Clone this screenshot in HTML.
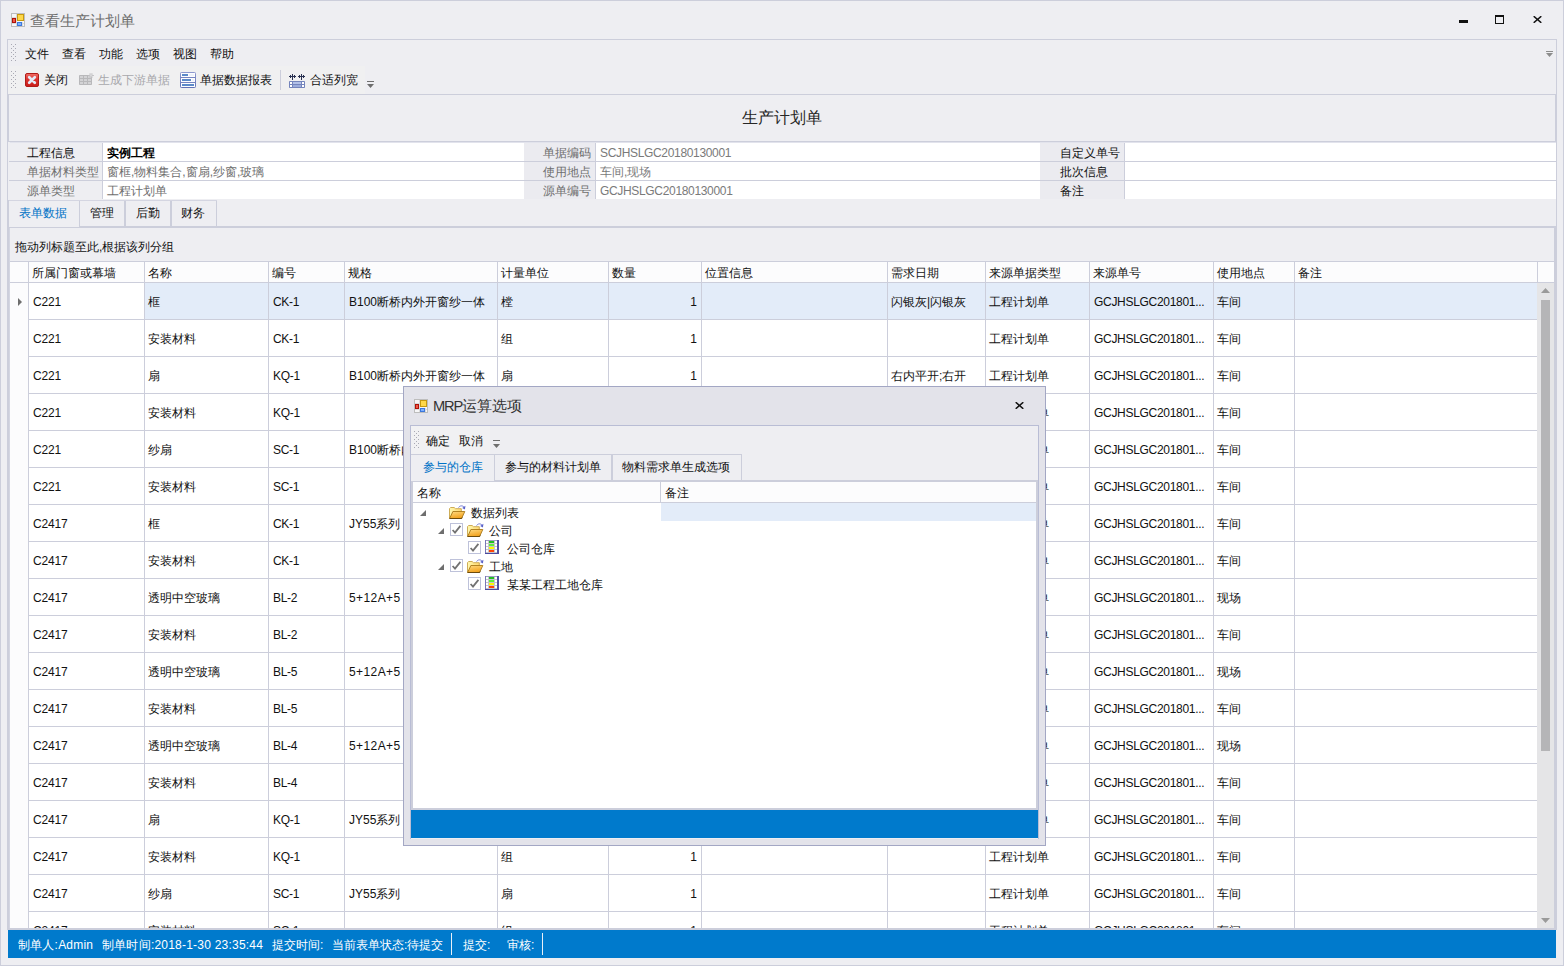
<!DOCTYPE html>
<html lang="zh"><head><meta charset="utf-8"><title>查看生产计划单</title>
<style>
html,body{margin:0;padding:0}
body{width:1564px;height:966px;overflow:hidden;position:relative;background:#EEEEF2;font-family:"Liberation Sans",sans-serif;font-size:12px}
#w{position:absolute;left:0;top:0;width:1564px;height:966px;box-sizing:border-box;border:1px solid #CCCEDB;z-index:50;pointer-events:none}
div{position:absolute;box-sizing:border-box}
.t{white-space:nowrap;overflow:visible}
.a{position:absolute;display:block}
</style></head><body>
<svg class="a" style="left:0;top:0" width="0" height="0"><defs><linearGradient id="cg" x1="0" y1="0" x2="0" y2="1"><stop offset="0" stop-color="#F07068"/><stop offset="0.45" stop-color="#DC3430"/><stop offset="1" stop-color="#C81C18"/></linearGradient><linearGradient id="rg" x1="0" y1="0" x2="0" y2="1"><stop offset="0" stop-color="#8C98CE"/><stop offset="1" stop-color="#6272B6"/></linearGradient><linearGradient id="fg" x1="0" y1="0" x2="0.4" y2="1"><stop offset="0" stop-color="#FFDC84"/><stop offset="1" stop-color="#F2A21E"/></linearGradient>
<linearGradient id="fb" x1="0" y1="0" x2="1" y2="0"><stop offset="0" stop-color="#FFF9B0"/><stop offset="1" stop-color="#FFD870"/></linearGradient></defs></svg>
<svg class="a" style="left:11px;top:13px" width="14" height="14" viewBox="0 0 14 14">
<rect x="0.5" y="0.5" width="13" height="13" fill="#F6F6F8" stroke="#BDBDBD"/><path d="M5.5 1V13M1 4.5H6M1 10.5H13M11.5 9V13" stroke="#DADADC" fill="none"/>
<rect x="6" y="1" width="7" height="7" fill="#C79A10"/><rect x="7" y="2" width="5" height="5" fill="#FFD84A"/>
<rect x="1" y="5" width="4" height="5" fill="#B01208"/><rect x="2" y="6" width="2" height="3" fill="#F0584A"/>
<rect x="6" y="9" width="5" height="4" fill="#3C78DC"/><rect x="7" y="10" width="3" height="2" fill="#7FB0FF"/>
</svg>
<div class="t" style="left:30px;top:10px;height:22px;line-height:22px;font-size:14.67px;color:#6E6E6E;">查看生产计划单</div>
<div style="left:1459px;top:20px;width:9px;height:3px;background:#111111;"></div>
<div style="left:1495px;top:15px;width:9px;height:9px;border:1px solid #111111;border-top-width:2px;"></div>
<svg class="a" style="left:1533px;top:16px" width="9" height="7" viewBox="0 0 9 7"><path d="M0.7 0.2L8.3 6.8M8.3 0.2L0.7 6.8" stroke="#111111" stroke-width="1.5"/></svg>
<div style="left:7px;top:39px;width:1550px;height:891px;border:1px solid #CCCEDB;border-bottom:none;"></div>
<svg class="a" style="left:11px;top:44px" width="6" height="18" viewBox="0 0 6 18"><rect x="0" y="0" width="1" height="1" fill="#A9A9B4"/><rect x="4" y="0" width="1" height="1" fill="#A9A9B4"/><rect x="2" y="2" width="1" height="1" fill="#A9A9B4"/><rect x="0" y="4" width="1" height="1" fill="#A9A9B4"/><rect x="4" y="4" width="1" height="1" fill="#A9A9B4"/><rect x="2" y="6" width="1" height="1" fill="#A9A9B4"/><rect x="0" y="8" width="1" height="1" fill="#A9A9B4"/><rect x="4" y="8" width="1" height="1" fill="#A9A9B4"/><rect x="2" y="10" width="1" height="1" fill="#A9A9B4"/><rect x="0" y="12" width="1" height="1" fill="#A9A9B4"/><rect x="4" y="12" width="1" height="1" fill="#A9A9B4"/><rect x="2" y="14" width="1" height="1" fill="#A9A9B4"/><rect x="0" y="16" width="1" height="1" fill="#A9A9B4"/><rect x="4" y="16" width="1" height="1" fill="#A9A9B4"/></svg>
<div class="t" style="left:25px;top:45px;height:19px;line-height:19px;color:#111111;">文件</div>
<div class="t" style="left:62px;top:45px;height:19px;line-height:19px;color:#111111;">查看</div>
<div class="t" style="left:99px;top:45px;height:19px;line-height:19px;color:#111111;">功能</div>
<div class="t" style="left:136px;top:45px;height:19px;line-height:19px;color:#111111;">选项</div>
<div class="t" style="left:173px;top:45px;height:19px;line-height:19px;color:#111111;">视图</div>
<div class="t" style="left:210px;top:45px;height:19px;line-height:19px;color:#111111;">帮助</div>
<div style="left:1546px;top:51px;width:7px;height:1px;background:#8C8C8C;"></div>
<svg class="a" style="left:1546px;top:53px" width="7" height="4" viewBox="0 0 7 4"><path d="M0 0H7L3.5 4Z" fill="#8C8C8C"/></svg>
<div style="left:8px;top:66px;width:357px;height:28px;background:#F0F0F1;"></div>
<svg class="a" style="left:11px;top:71px" width="6" height="18" viewBox="0 0 6 18"><rect x="0" y="0" width="1" height="1" fill="#A9A9B4"/><rect x="4" y="0" width="1" height="1" fill="#A9A9B4"/><rect x="2" y="2" width="1" height="1" fill="#A9A9B4"/><rect x="0" y="4" width="1" height="1" fill="#A9A9B4"/><rect x="4" y="4" width="1" height="1" fill="#A9A9B4"/><rect x="2" y="6" width="1" height="1" fill="#A9A9B4"/><rect x="0" y="8" width="1" height="1" fill="#A9A9B4"/><rect x="4" y="8" width="1" height="1" fill="#A9A9B4"/><rect x="2" y="10" width="1" height="1" fill="#A9A9B4"/><rect x="0" y="12" width="1" height="1" fill="#A9A9B4"/><rect x="4" y="12" width="1" height="1" fill="#A9A9B4"/><rect x="2" y="14" width="1" height="1" fill="#A9A9B4"/><rect x="0" y="16" width="1" height="1" fill="#A9A9B4"/><rect x="4" y="16" width="1" height="1" fill="#A9A9B4"/></svg>
<svg class="a" style="left:25px;top:73px" width="14" height="14" viewBox="0 0 14 14">
<rect x="0.5" y="0.5" width="13" height="13" rx="1.5" fill="url(#cg)" stroke="#B01C18"/>
<path d="M4.2 4.2L9.8 9.8M9.8 4.2L4.2 9.8" stroke="#E4EAF6" stroke-width="2.7" stroke-linecap="round"/></svg>
<div class="t" style="left:44px;top:71px;height:19px;line-height:19px;color:#111111;">关闭</div>
<svg class="a" style="left:79px;top:72px" width="16" height="16" viewBox="0 0 16 16">
<rect x="0" y="3" width="13" height="10" rx="0.8" fill="#B8B8BA"/>
<g fill="#D3D3D5"><rect x="1" y="4" width="3" height="2"/><rect x="5" y="4" width="3" height="2"/><rect x="9" y="4" width="3" height="2"/><rect x="1" y="7" width="3" height="2"/><rect x="5" y="7" width="3" height="2"/><rect x="9" y="7" width="3" height="2"/><rect x="1" y="10" width="3" height="2"/><rect x="5" y="10" width="3" height="2"/><rect x="9" y="10" width="3" height="2"/></g>
<path d="M12 1V6.5M9.5 3.5H15M10.2 1.8L13.8 5.3M13.8 1.8L10.2 5.3" stroke="#C4C4C6" stroke-width="1"/><rect x="11" y="2.5" width="2" height="2" fill="#D6D6D8"/></svg>
<div class="t" style="left:98px;top:71px;height:19px;line-height:19px;color:#A8A8AC;">生成下游单据</div>
<svg class="a" style="left:180px;top:72px" width="16" height="16" viewBox="0 0 16 16">
<rect x="0.5" y="0.5" width="15" height="15" rx="0.8" fill="#FDFDFF" stroke="url(#rg)"/>
<path d="M0.5 5.5H15.5M0.5 10.5H15.5" stroke="#7684C0"/>
<rect x="2" y="2" width="6" height="2" fill="#5C8AC8"/><rect x="9" y="2" width="5" height="2" fill="#EEF2FA"/><rect x="2" y="7" width="9" height="2" fill="#5C8AC8"/><rect x="12" y="7" width="2" height="2" fill="#EEF2FA"/><rect x="2" y="12" width="12" height="2" fill="#5C8AC8"/></svg>
<div class="t" style="left:200px;top:71px;height:19px;line-height:19px;color:#111111;">单据数据报表</div>
<div style="left:280px;top:70px;width:1px;height:20px;background:#CCCEDB;"></div>
<svg class="a" style="left:289px;top:74px" width="16" height="14" viewBox="0 0 16 14">
<g fill="#283050"><rect x="3" y="0" width="1" height="6"/><rect x="12" y="0" width="1" height="6"/>
<rect x="0" y="2" width="7" height="1"/><rect x="9" y="2" width="7" height="1"/>
<rect x="1" y="1" width="1" height="3"/><rect x="5" y="1" width="1" height="3"/><rect x="10" y="1" width="1" height="3"/><rect x="14" y="1" width="1" height="3"/></g>
<rect x="0" y="7" width="16" height="7" rx="0.8" fill="#7484BC"/>
<rect x="4" y="8" width="8" height="2" fill="#B2C0E8"/><rect x="4" y="11" width="8" height="2" fill="#9CACDC"/>
<g fill="#fff"><rect x="1" y="8" width="2" height="2"/><rect x="13" y="8" width="2" height="2"/><rect x="1" y="11" width="2" height="2"/><rect x="13" y="11" width="2" height="2"/></g></svg>
<div class="t" style="left:310px;top:71px;height:19px;line-height:19px;color:#111111;">合适列宽</div>
<div style="left:367px;top:81px;width:7px;height:1px;background:#6E6E6E;"></div>
<svg class="a" style="left:367px;top:84px" width="7" height="4" viewBox="0 0 7 4"><path d="M0 0H7L3.5 4Z" fill="#6E6E6E"/></svg>
<div style="left:8px;top:94px;width:1548px;height:48px;border:1px solid #CCCEDB;"></div>
<div class="t" style="left:0px;top:106px;height:24px;line-height:24px;width:1564px;text-align:center;font-size:16px;color:#262626;left:0;">生产计划单</div>
<div style="left:103px;top:143px;width:421px;height:18px;background:#fff;"></div>
<div style="left:596px;top:143px;width:444px;height:18px;background:#fff;"></div>
<div style="left:1125px;top:143px;width:431px;height:18px;background:#fff;"></div>
<div style="left:524px;top:143px;width:71px;height:18px;background:#EBEBF0;"></div>
<div style="left:1040px;top:143px;width:84px;height:18px;background:#EBEBF0;"></div>
<div style="left:102px;top:143px;width:1px;height:18px;background:#CCCEDB;"></div>
<div style="left:595px;top:143px;width:1px;height:18px;background:#CCCEDB;"></div>
<div style="left:1124px;top:143px;width:1px;height:18px;background:#CCCEDB;"></div>
<div class="t" style="left:27px;top:144px;height:19px;line-height:19px;color:#111111;">工程信息</div>
<div class="t" style="left:107px;top:144px;height:19px;line-height:19px;color:#000;font-weight:bold;">实例工程</div>
<div class="t" style="left:543px;top:144px;height:19px;line-height:19px;color:#6E6E6E;">单据编码</div>
<div class="t" style="left:600px;top:144px;height:19px;line-height:19px;color:#7A7A7A;"><span style="letter-spacing:-0.33px">SCJHSLGC20180130001</span></div>
<div class="t" style="left:1060px;top:144px;height:19px;line-height:19px;color:#111111;">自定义单号</div>
<div style="left:103px;top:162px;width:421px;height:18px;background:#fff;"></div>
<div style="left:596px;top:162px;width:444px;height:18px;background:#fff;"></div>
<div style="left:1125px;top:162px;width:431px;height:18px;background:#fff;"></div>
<div style="left:524px;top:162px;width:71px;height:18px;background:#EBEBF0;"></div>
<div style="left:1040px;top:162px;width:84px;height:18px;background:#EBEBF0;"></div>
<div style="left:102px;top:162px;width:1px;height:18px;background:#CCCEDB;"></div>
<div style="left:595px;top:162px;width:1px;height:18px;background:#CCCEDB;"></div>
<div style="left:1124px;top:162px;width:1px;height:18px;background:#CCCEDB;"></div>
<div class="t" style="left:27px;top:163px;height:19px;line-height:19px;color:#6E6E6E;">单据材料类型</div>
<div class="t" style="left:107px;top:163px;height:19px;line-height:19px;color:#6E6E6E;">窗框,物料集合,窗扇,纱窗,玻璃</div>
<div class="t" style="left:543px;top:163px;height:19px;line-height:19px;color:#6E6E6E;">使用地点</div>
<div class="t" style="left:600px;top:163px;height:19px;line-height:19px;color:#7A7A7A;">车间,现场</div>
<div class="t" style="left:1060px;top:163px;height:19px;line-height:19px;color:#111111;">批次信息</div>
<div style="left:103px;top:181px;width:421px;height:18px;background:#fff;"></div>
<div style="left:596px;top:181px;width:444px;height:18px;background:#fff;"></div>
<div style="left:1125px;top:181px;width:431px;height:18px;background:#fff;"></div>
<div style="left:524px;top:181px;width:71px;height:18px;background:#EBEBF0;"></div>
<div style="left:1040px;top:181px;width:84px;height:18px;background:#EBEBF0;"></div>
<div style="left:102px;top:181px;width:1px;height:18px;background:#CCCEDB;"></div>
<div style="left:595px;top:181px;width:1px;height:18px;background:#CCCEDB;"></div>
<div style="left:1124px;top:181px;width:1px;height:18px;background:#CCCEDB;"></div>
<div class="t" style="left:27px;top:182px;height:19px;line-height:19px;color:#6E6E6E;">源单类型</div>
<div class="t" style="left:107px;top:182px;height:19px;line-height:19px;color:#6E6E6E;">工程计划单</div>
<div class="t" style="left:543px;top:182px;height:19px;line-height:19px;color:#6E6E6E;">源单编号</div>
<div class="t" style="left:600px;top:182px;height:19px;line-height:19px;color:#7A7A7A;"><span style="letter-spacing:-0.33px">GCJHSLGC20180130001</span></div>
<div class="t" style="left:1060px;top:182px;height:19px;line-height:19px;color:#111111;">备注</div>
<div style="left:9px;top:161px;width:1547px;height:1px;background:#CCCEDB;"></div>
<div style="left:9px;top:180px;width:1547px;height:1px;background:#CCCEDB;"></div>
<div style="left:10px;top:142px;width:1546px;height:1px;background:#E2E3EC;"></div>
<div style="left:8px;top:200px;width:209px;height:1px;background:#D4D5E1;"></div>
<div class="t" style="left:19px;top:203px;height:21px;line-height:21px;color:#0072C6;z-index:3;">表单数据</div>
<div style="left:79px;top:201px;width:46px;height:26px;border-left:1px solid #CCCEDB;border-right:1px solid #CCCEDB;border-bottom:1px solid #CCCEDB;"></div>
<div class="t" style="left:90px;top:203px;height:21px;line-height:21px;color:#111111;z-index:3;">管理</div>
<div style="left:125px;top:201px;width:46px;height:26px;border-left:1px solid #CCCEDB;border-right:1px solid #CCCEDB;border-bottom:1px solid #CCCEDB;"></div>
<div class="t" style="left:136px;top:203px;height:21px;line-height:21px;color:#111111;z-index:3;">后勤</div>
<div style="left:171px;top:201px;width:46px;height:26px;border-left:1px solid #CCCEDB;border-right:1px solid #CCCEDB;border-bottom:1px solid #CCCEDB;"></div>
<div class="t" style="left:181px;top:203px;height:21px;line-height:21px;color:#111111;z-index:3;">财务</div>
<div style="left:8px;top:200px;width:1px;height:730px;background:#CCCEDB;"></div>
<div style="left:1555px;top:227px;width:1px;height:703px;background:#CCCEDB;"></div>
<div style="left:9px;top:227px;width:1546px;height:1px;background:#CCCEDB;"></div>
<div style="left:217px;top:226px;width:1339px;height:1px;background:#CCCEDB;"></div>
<div style="left:9px;top:228px;width:1px;height:702px;background:#D3D5E1;"></div>
<div style="left:1554px;top:228px;width:1px;height:702px;background:#CCCEDB;"></div>
<div class="t" style="left:15px;top:237px;height:21px;line-height:21px;color:#111111;z-index:3;">拖动列标题至此,根据该列分组</div>
<div style="left:10px;top:261px;width:1544px;height:667px;background:#fff;z-index:2;"></div>
<div style="left:10px;top:261px;width:1544px;height:22px;background:#FCFCFD;border-top:1px solid #CCCEDB;border-bottom:1px solid #CCCEDB;z-index:3;"></div>
<div style="left:10px;top:283px;width:18px;height:645px;background:#FCFCFD;z-index:3;"></div>
<div class="t" style="left:32px;top:263px;height:21px;line-height:21px;color:#111111;z-index:5;">所属门窗或幕墙</div>
<div class="t" style="left:148px;top:263px;height:21px;line-height:21px;color:#111111;z-index:5;">名称</div>
<div class="t" style="left:272px;top:263px;height:21px;line-height:21px;color:#111111;z-index:5;">编号</div>
<div class="t" style="left:348px;top:263px;height:21px;line-height:21px;color:#111111;z-index:5;">规格</div>
<div class="t" style="left:501px;top:263px;height:21px;line-height:21px;color:#111111;z-index:5;">计量单位</div>
<div class="t" style="left:612px;top:263px;height:21px;line-height:21px;color:#111111;z-index:5;">数量</div>
<div class="t" style="left:705px;top:263px;height:21px;line-height:21px;color:#111111;z-index:5;">位置信息</div>
<div class="t" style="left:891px;top:263px;height:21px;line-height:21px;color:#111111;z-index:5;">需求日期</div>
<div class="t" style="left:989px;top:263px;height:21px;line-height:21px;color:#111111;z-index:5;">来源单据类型</div>
<div class="t" style="left:1093px;top:263px;height:21px;line-height:21px;color:#111111;z-index:5;">来源单号</div>
<div class="t" style="left:1217px;top:263px;height:21px;line-height:21px;color:#111111;z-index:5;">使用地点</div>
<div class="t" style="left:1298px;top:263px;height:21px;line-height:21px;color:#111111;z-index:5;">备注</div>
<div style="left:145px;top:283px;width:1392px;height:36px;background:#E3ECF9;z-index:3;"></div>
<div style="left:28px;top:319px;width:1509px;height:1px;background:#CCCEDB;z-index:4;"></div>
<div style="left:28px;top:356px;width:1509px;height:1px;background:#CCCEDB;z-index:4;"></div>
<div style="left:28px;top:393px;width:1509px;height:1px;background:#CCCEDB;z-index:4;"></div>
<div style="left:28px;top:430px;width:1509px;height:1px;background:#CCCEDB;z-index:4;"></div>
<div style="left:28px;top:467px;width:1509px;height:1px;background:#CCCEDB;z-index:4;"></div>
<div style="left:28px;top:504px;width:1509px;height:1px;background:#CCCEDB;z-index:4;"></div>
<div style="left:28px;top:541px;width:1509px;height:1px;background:#CCCEDB;z-index:4;"></div>
<div style="left:28px;top:578px;width:1509px;height:1px;background:#CCCEDB;z-index:4;"></div>
<div style="left:28px;top:615px;width:1509px;height:1px;background:#CCCEDB;z-index:4;"></div>
<div style="left:28px;top:652px;width:1509px;height:1px;background:#CCCEDB;z-index:4;"></div>
<div style="left:28px;top:689px;width:1509px;height:1px;background:#CCCEDB;z-index:4;"></div>
<div style="left:28px;top:726px;width:1509px;height:1px;background:#CCCEDB;z-index:4;"></div>
<div style="left:28px;top:763px;width:1509px;height:1px;background:#CCCEDB;z-index:4;"></div>
<div style="left:28px;top:800px;width:1509px;height:1px;background:#CCCEDB;z-index:4;"></div>
<div style="left:28px;top:837px;width:1509px;height:1px;background:#CCCEDB;z-index:4;"></div>
<div style="left:28px;top:874px;width:1509px;height:1px;background:#CCCEDB;z-index:4;"></div>
<div style="left:28px;top:911px;width:1509px;height:1px;background:#CCCEDB;z-index:4;"></div>
<div style="left:28px;top:262px;width:1px;height:666px;background:#CCCEDB;z-index:4;"></div>
<div style="left:144px;top:262px;width:1px;height:666px;background:#CCCEDB;z-index:4;"></div>
<div style="left:268px;top:262px;width:1px;height:666px;background:#CCCEDB;z-index:4;"></div>
<div style="left:344px;top:262px;width:1px;height:666px;background:#CCCEDB;z-index:4;"></div>
<div style="left:497px;top:262px;width:1px;height:666px;background:#CCCEDB;z-index:4;"></div>
<div style="left:608px;top:262px;width:1px;height:666px;background:#CCCEDB;z-index:4;"></div>
<div style="left:701px;top:262px;width:1px;height:666px;background:#CCCEDB;z-index:4;"></div>
<div style="left:887px;top:262px;width:1px;height:666px;background:#CCCEDB;z-index:4;"></div>
<div style="left:985px;top:262px;width:1px;height:666px;background:#CCCEDB;z-index:4;"></div>
<div style="left:1089px;top:262px;width:1px;height:666px;background:#CCCEDB;z-index:4;"></div>
<div style="left:1213px;top:262px;width:1px;height:666px;background:#CCCEDB;z-index:4;"></div>
<div style="left:1294px;top:262px;width:1px;height:666px;background:#CCCEDB;z-index:4;"></div>
<div style="left:1537px;top:262px;width:1px;height:666px;background:#CCCEDB;z-index:4;"></div>
<svg class="a" style="left:18px;top:298px;z-index:5" width="4" height="8" viewBox="0 0 4 8"><path d="M0 0L4 4L0 8Z" fill="#6E6E6E"/></svg>
<div class="t" style="left:33px;top:284px;height:37px;line-height:37px;color:#111111;z-index:5;letter-spacing:-0.15px;">C221</div>
<div class="t" style="left:148px;top:284px;height:37px;line-height:37px;color:#111111;z-index:5;">框</div>
<div class="t" style="left:273px;top:284px;height:37px;line-height:37px;color:#111111;z-index:5;letter-spacing:-0.3px;">CK-1</div>
<div class="t" style="left:349px;top:284px;height:37px;line-height:37px;color:#111111;z-index:5;">B100断桥内外开窗纱一体</div>
<div class="t" style="left:501px;top:284px;height:37px;line-height:37px;color:#111111;z-index:5;">樘</div>
<div class="t" style="left:891px;top:284px;height:37px;line-height:37px;color:#111111;z-index:5;">闪银灰|闪银灰</div>
<div class="t" style="left:989px;top:284px;height:37px;line-height:37px;color:#111111;z-index:5;">工程计划单</div>
<div class="t" style="left:1094px;top:284px;height:37px;line-height:37px;color:#111111;z-index:5;"><span style="letter-spacing:-0.3px">GCJHSLGC201801...</span></div>
<div class="t" style="left:1217px;top:284px;height:37px;line-height:37px;color:#111111;z-index:5;">车间</div>
<div class="t" style="left:608px;top:284px;width:89px;height:37px;line-height:37px;text-align:right;color:#111111;z-index:5;">1</div>
<div class="t" style="left:33px;top:321px;height:37px;line-height:37px;color:#111111;z-index:5;letter-spacing:-0.15px;">C221</div>
<div class="t" style="left:148px;top:321px;height:37px;line-height:37px;color:#111111;z-index:5;">安装材料</div>
<div class="t" style="left:273px;top:321px;height:37px;line-height:37px;color:#111111;z-index:5;letter-spacing:-0.3px;">CK-1</div>
<div class="t" style="left:501px;top:321px;height:37px;line-height:37px;color:#111111;z-index:5;">组</div>
<div class="t" style="left:989px;top:321px;height:37px;line-height:37px;color:#111111;z-index:5;">工程计划单</div>
<div class="t" style="left:1094px;top:321px;height:37px;line-height:37px;color:#111111;z-index:5;"><span style="letter-spacing:-0.3px">GCJHSLGC201801...</span></div>
<div class="t" style="left:1217px;top:321px;height:37px;line-height:37px;color:#111111;z-index:5;">车间</div>
<div class="t" style="left:608px;top:321px;width:89px;height:37px;line-height:37px;text-align:right;color:#111111;z-index:5;">1</div>
<div class="t" style="left:33px;top:358px;height:37px;line-height:37px;color:#111111;z-index:5;letter-spacing:-0.15px;">C221</div>
<div class="t" style="left:148px;top:358px;height:37px;line-height:37px;color:#111111;z-index:5;">扇</div>
<div class="t" style="left:273px;top:358px;height:37px;line-height:37px;color:#111111;z-index:5;letter-spacing:-0.3px;">KQ-1</div>
<div class="t" style="left:349px;top:358px;height:37px;line-height:37px;color:#111111;z-index:5;">B100断桥内外开窗纱一体</div>
<div class="t" style="left:501px;top:358px;height:37px;line-height:37px;color:#111111;z-index:5;">扇</div>
<div class="t" style="left:891px;top:358px;height:37px;line-height:37px;color:#111111;z-index:5;">右内平开;右开</div>
<div class="t" style="left:989px;top:358px;height:37px;line-height:37px;color:#111111;z-index:5;">工程计划单</div>
<div class="t" style="left:1094px;top:358px;height:37px;line-height:37px;color:#111111;z-index:5;"><span style="letter-spacing:-0.3px">GCJHSLGC201801...</span></div>
<div class="t" style="left:1217px;top:358px;height:37px;line-height:37px;color:#111111;z-index:5;">车间</div>
<div class="t" style="left:608px;top:358px;width:89px;height:37px;line-height:37px;text-align:right;color:#111111;z-index:5;">1</div>
<div class="t" style="left:33px;top:395px;height:37px;line-height:37px;color:#111111;z-index:5;letter-spacing:-0.15px;">C221</div>
<div class="t" style="left:148px;top:395px;height:37px;line-height:37px;color:#111111;z-index:5;">安装材料</div>
<div class="t" style="left:273px;top:395px;height:37px;line-height:37px;color:#111111;z-index:5;letter-spacing:-0.3px;">KQ-1</div>
<div class="t" style="left:501px;top:395px;height:37px;line-height:37px;color:#111111;z-index:5;">组</div>
<div class="t" style="left:989px;top:395px;height:37px;line-height:37px;color:#111111;z-index:5;">工程计划单</div>
<div class="t" style="left:1094px;top:395px;height:37px;line-height:37px;color:#111111;z-index:5;"><span style="letter-spacing:-0.3px">GCJHSLGC201801...</span></div>
<div class="t" style="left:1217px;top:395px;height:37px;line-height:37px;color:#111111;z-index:5;">车间</div>
<div class="t" style="left:608px;top:395px;width:89px;height:37px;line-height:37px;text-align:right;color:#111111;z-index:5;">1</div>
<div class="t" style="left:33px;top:432px;height:37px;line-height:37px;color:#111111;z-index:5;letter-spacing:-0.15px;">C221</div>
<div class="t" style="left:148px;top:432px;height:37px;line-height:37px;color:#111111;z-index:5;">纱扇</div>
<div class="t" style="left:273px;top:432px;height:37px;line-height:37px;color:#111111;z-index:5;letter-spacing:-0.3px;">SC-1</div>
<div class="t" style="left:349px;top:432px;height:37px;line-height:37px;color:#111111;z-index:5;">B100断桥内外开窗纱一体</div>
<div class="t" style="left:501px;top:432px;height:37px;line-height:37px;color:#111111;z-index:5;">扇</div>
<div class="t" style="left:989px;top:432px;height:37px;line-height:37px;color:#111111;z-index:5;">工程计划单</div>
<div class="t" style="left:1094px;top:432px;height:37px;line-height:37px;color:#111111;z-index:5;"><span style="letter-spacing:-0.3px">GCJHSLGC201801...</span></div>
<div class="t" style="left:1217px;top:432px;height:37px;line-height:37px;color:#111111;z-index:5;">车间</div>
<div class="t" style="left:608px;top:432px;width:89px;height:37px;line-height:37px;text-align:right;color:#111111;z-index:5;">1</div>
<div class="t" style="left:33px;top:469px;height:37px;line-height:37px;color:#111111;z-index:5;letter-spacing:-0.15px;">C221</div>
<div class="t" style="left:148px;top:469px;height:37px;line-height:37px;color:#111111;z-index:5;">安装材料</div>
<div class="t" style="left:273px;top:469px;height:37px;line-height:37px;color:#111111;z-index:5;letter-spacing:-0.3px;">SC-1</div>
<div class="t" style="left:501px;top:469px;height:37px;line-height:37px;color:#111111;z-index:5;">组</div>
<div class="t" style="left:989px;top:469px;height:37px;line-height:37px;color:#111111;z-index:5;">工程计划单</div>
<div class="t" style="left:1094px;top:469px;height:37px;line-height:37px;color:#111111;z-index:5;"><span style="letter-spacing:-0.3px">GCJHSLGC201801...</span></div>
<div class="t" style="left:1217px;top:469px;height:37px;line-height:37px;color:#111111;z-index:5;">车间</div>
<div class="t" style="left:608px;top:469px;width:89px;height:37px;line-height:37px;text-align:right;color:#111111;z-index:5;">1</div>
<div class="t" style="left:33px;top:506px;height:37px;line-height:37px;color:#111111;z-index:5;letter-spacing:-0.15px;">C2417</div>
<div class="t" style="left:148px;top:506px;height:37px;line-height:37px;color:#111111;z-index:5;">框</div>
<div class="t" style="left:273px;top:506px;height:37px;line-height:37px;color:#111111;z-index:5;letter-spacing:-0.3px;">CK-1</div>
<div class="t" style="left:349px;top:506px;height:37px;line-height:37px;color:#111111;z-index:5;">JY55系列</div>
<div class="t" style="left:501px;top:506px;height:37px;line-height:37px;color:#111111;z-index:5;">樘</div>
<div class="t" style="left:989px;top:506px;height:37px;line-height:37px;color:#111111;z-index:5;">工程计划单</div>
<div class="t" style="left:1094px;top:506px;height:37px;line-height:37px;color:#111111;z-index:5;"><span style="letter-spacing:-0.3px">GCJHSLGC201801...</span></div>
<div class="t" style="left:1217px;top:506px;height:37px;line-height:37px;color:#111111;z-index:5;">车间</div>
<div class="t" style="left:608px;top:506px;width:89px;height:37px;line-height:37px;text-align:right;color:#111111;z-index:5;">1</div>
<div class="t" style="left:33px;top:543px;height:37px;line-height:37px;color:#111111;z-index:5;letter-spacing:-0.15px;">C2417</div>
<div class="t" style="left:148px;top:543px;height:37px;line-height:37px;color:#111111;z-index:5;">安装材料</div>
<div class="t" style="left:273px;top:543px;height:37px;line-height:37px;color:#111111;z-index:5;letter-spacing:-0.3px;">CK-1</div>
<div class="t" style="left:501px;top:543px;height:37px;line-height:37px;color:#111111;z-index:5;">组</div>
<div class="t" style="left:989px;top:543px;height:37px;line-height:37px;color:#111111;z-index:5;">工程计划单</div>
<div class="t" style="left:1094px;top:543px;height:37px;line-height:37px;color:#111111;z-index:5;"><span style="letter-spacing:-0.3px">GCJHSLGC201801...</span></div>
<div class="t" style="left:1217px;top:543px;height:37px;line-height:37px;color:#111111;z-index:5;">车间</div>
<div class="t" style="left:608px;top:543px;width:89px;height:37px;line-height:37px;text-align:right;color:#111111;z-index:5;">1</div>
<div class="t" style="left:33px;top:580px;height:37px;line-height:37px;color:#111111;z-index:5;letter-spacing:-0.15px;">C2417</div>
<div class="t" style="left:148px;top:580px;height:37px;line-height:37px;color:#111111;z-index:5;">透明中空玻璃</div>
<div class="t" style="left:273px;top:580px;height:37px;line-height:37px;color:#111111;z-index:5;letter-spacing:-0.3px;">BL-2</div>
<div class="t" style="left:349px;top:580px;height:37px;line-height:37px;color:#111111;z-index:5;letter-spacing:0.4px;">5+12A+5</div>
<div class="t" style="left:501px;top:580px;height:37px;line-height:37px;color:#111111;z-index:5;">块</div>
<div class="t" style="left:989px;top:580px;height:37px;line-height:37px;color:#111111;z-index:5;">工程计划单</div>
<div class="t" style="left:1094px;top:580px;height:37px;line-height:37px;color:#111111;z-index:5;"><span style="letter-spacing:-0.3px">GCJHSLGC201801...</span></div>
<div class="t" style="left:1217px;top:580px;height:37px;line-height:37px;color:#111111;z-index:5;">现场</div>
<div class="t" style="left:608px;top:580px;width:89px;height:37px;line-height:37px;text-align:right;color:#111111;z-index:5;">1</div>
<div class="t" style="left:33px;top:617px;height:37px;line-height:37px;color:#111111;z-index:5;letter-spacing:-0.15px;">C2417</div>
<div class="t" style="left:148px;top:617px;height:37px;line-height:37px;color:#111111;z-index:5;">安装材料</div>
<div class="t" style="left:273px;top:617px;height:37px;line-height:37px;color:#111111;z-index:5;letter-spacing:-0.3px;">BL-2</div>
<div class="t" style="left:501px;top:617px;height:37px;line-height:37px;color:#111111;z-index:5;">组</div>
<div class="t" style="left:989px;top:617px;height:37px;line-height:37px;color:#111111;z-index:5;">工程计划单</div>
<div class="t" style="left:1094px;top:617px;height:37px;line-height:37px;color:#111111;z-index:5;"><span style="letter-spacing:-0.3px">GCJHSLGC201801...</span></div>
<div class="t" style="left:1217px;top:617px;height:37px;line-height:37px;color:#111111;z-index:5;">车间</div>
<div class="t" style="left:608px;top:617px;width:89px;height:37px;line-height:37px;text-align:right;color:#111111;z-index:5;">1</div>
<div class="t" style="left:33px;top:654px;height:37px;line-height:37px;color:#111111;z-index:5;letter-spacing:-0.15px;">C2417</div>
<div class="t" style="left:148px;top:654px;height:37px;line-height:37px;color:#111111;z-index:5;">透明中空玻璃</div>
<div class="t" style="left:273px;top:654px;height:37px;line-height:37px;color:#111111;z-index:5;letter-spacing:-0.3px;">BL-5</div>
<div class="t" style="left:349px;top:654px;height:37px;line-height:37px;color:#111111;z-index:5;letter-spacing:0.4px;">5+12A+5</div>
<div class="t" style="left:501px;top:654px;height:37px;line-height:37px;color:#111111;z-index:5;">块</div>
<div class="t" style="left:989px;top:654px;height:37px;line-height:37px;color:#111111;z-index:5;">工程计划单</div>
<div class="t" style="left:1094px;top:654px;height:37px;line-height:37px;color:#111111;z-index:5;"><span style="letter-spacing:-0.3px">GCJHSLGC201801...</span></div>
<div class="t" style="left:1217px;top:654px;height:37px;line-height:37px;color:#111111;z-index:5;">现场</div>
<div class="t" style="left:608px;top:654px;width:89px;height:37px;line-height:37px;text-align:right;color:#111111;z-index:5;">1</div>
<div class="t" style="left:33px;top:691px;height:37px;line-height:37px;color:#111111;z-index:5;letter-spacing:-0.15px;">C2417</div>
<div class="t" style="left:148px;top:691px;height:37px;line-height:37px;color:#111111;z-index:5;">安装材料</div>
<div class="t" style="left:273px;top:691px;height:37px;line-height:37px;color:#111111;z-index:5;letter-spacing:-0.3px;">BL-5</div>
<div class="t" style="left:501px;top:691px;height:37px;line-height:37px;color:#111111;z-index:5;">组</div>
<div class="t" style="left:989px;top:691px;height:37px;line-height:37px;color:#111111;z-index:5;">工程计划单</div>
<div class="t" style="left:1094px;top:691px;height:37px;line-height:37px;color:#111111;z-index:5;"><span style="letter-spacing:-0.3px">GCJHSLGC201801...</span></div>
<div class="t" style="left:1217px;top:691px;height:37px;line-height:37px;color:#111111;z-index:5;">车间</div>
<div class="t" style="left:608px;top:691px;width:89px;height:37px;line-height:37px;text-align:right;color:#111111;z-index:5;">1</div>
<div class="t" style="left:33px;top:728px;height:37px;line-height:37px;color:#111111;z-index:5;letter-spacing:-0.15px;">C2417</div>
<div class="t" style="left:148px;top:728px;height:37px;line-height:37px;color:#111111;z-index:5;">透明中空玻璃</div>
<div class="t" style="left:273px;top:728px;height:37px;line-height:37px;color:#111111;z-index:5;letter-spacing:-0.3px;">BL-4</div>
<div class="t" style="left:349px;top:728px;height:37px;line-height:37px;color:#111111;z-index:5;letter-spacing:0.4px;">5+12A+5</div>
<div class="t" style="left:501px;top:728px;height:37px;line-height:37px;color:#111111;z-index:5;">块</div>
<div class="t" style="left:989px;top:728px;height:37px;line-height:37px;color:#111111;z-index:5;">工程计划单</div>
<div class="t" style="left:1094px;top:728px;height:37px;line-height:37px;color:#111111;z-index:5;"><span style="letter-spacing:-0.3px">GCJHSLGC201801...</span></div>
<div class="t" style="left:1217px;top:728px;height:37px;line-height:37px;color:#111111;z-index:5;">现场</div>
<div class="t" style="left:608px;top:728px;width:89px;height:37px;line-height:37px;text-align:right;color:#111111;z-index:5;">1</div>
<div class="t" style="left:33px;top:765px;height:37px;line-height:37px;color:#111111;z-index:5;letter-spacing:-0.15px;">C2417</div>
<div class="t" style="left:148px;top:765px;height:37px;line-height:37px;color:#111111;z-index:5;">安装材料</div>
<div class="t" style="left:273px;top:765px;height:37px;line-height:37px;color:#111111;z-index:5;letter-spacing:-0.3px;">BL-4</div>
<div class="t" style="left:501px;top:765px;height:37px;line-height:37px;color:#111111;z-index:5;">组</div>
<div class="t" style="left:989px;top:765px;height:37px;line-height:37px;color:#111111;z-index:5;">工程计划单</div>
<div class="t" style="left:1094px;top:765px;height:37px;line-height:37px;color:#111111;z-index:5;"><span style="letter-spacing:-0.3px">GCJHSLGC201801...</span></div>
<div class="t" style="left:1217px;top:765px;height:37px;line-height:37px;color:#111111;z-index:5;">车间</div>
<div class="t" style="left:608px;top:765px;width:89px;height:37px;line-height:37px;text-align:right;color:#111111;z-index:5;">1</div>
<div class="t" style="left:33px;top:802px;height:37px;line-height:37px;color:#111111;z-index:5;letter-spacing:-0.15px;">C2417</div>
<div class="t" style="left:148px;top:802px;height:37px;line-height:37px;color:#111111;z-index:5;">扇</div>
<div class="t" style="left:273px;top:802px;height:37px;line-height:37px;color:#111111;z-index:5;letter-spacing:-0.3px;">KQ-1</div>
<div class="t" style="left:349px;top:802px;height:37px;line-height:37px;color:#111111;z-index:5;">JY55系列</div>
<div class="t" style="left:501px;top:802px;height:37px;line-height:37px;color:#111111;z-index:5;">扇</div>
<div class="t" style="left:989px;top:802px;height:37px;line-height:37px;color:#111111;z-index:5;">工程计划单</div>
<div class="t" style="left:1094px;top:802px;height:37px;line-height:37px;color:#111111;z-index:5;"><span style="letter-spacing:-0.3px">GCJHSLGC201801...</span></div>
<div class="t" style="left:1217px;top:802px;height:37px;line-height:37px;color:#111111;z-index:5;">车间</div>
<div class="t" style="left:608px;top:802px;width:89px;height:37px;line-height:37px;text-align:right;color:#111111;z-index:5;">1</div>
<div class="t" style="left:33px;top:839px;height:37px;line-height:37px;color:#111111;z-index:5;letter-spacing:-0.15px;">C2417</div>
<div class="t" style="left:148px;top:839px;height:37px;line-height:37px;color:#111111;z-index:5;">安装材料</div>
<div class="t" style="left:273px;top:839px;height:37px;line-height:37px;color:#111111;z-index:5;letter-spacing:-0.3px;">KQ-1</div>
<div class="t" style="left:501px;top:839px;height:37px;line-height:37px;color:#111111;z-index:5;">组</div>
<div class="t" style="left:989px;top:839px;height:37px;line-height:37px;color:#111111;z-index:5;">工程计划单</div>
<div class="t" style="left:1094px;top:839px;height:37px;line-height:37px;color:#111111;z-index:5;"><span style="letter-spacing:-0.3px">GCJHSLGC201801...</span></div>
<div class="t" style="left:1217px;top:839px;height:37px;line-height:37px;color:#111111;z-index:5;">车间</div>
<div class="t" style="left:608px;top:839px;width:89px;height:37px;line-height:37px;text-align:right;color:#111111;z-index:5;">1</div>
<div class="t" style="left:33px;top:876px;height:37px;line-height:37px;color:#111111;z-index:5;letter-spacing:-0.15px;">C2417</div>
<div class="t" style="left:148px;top:876px;height:37px;line-height:37px;color:#111111;z-index:5;">纱扇</div>
<div class="t" style="left:273px;top:876px;height:37px;line-height:37px;color:#111111;z-index:5;letter-spacing:-0.3px;">SC-1</div>
<div class="t" style="left:349px;top:876px;height:37px;line-height:37px;color:#111111;z-index:5;">JY55系列</div>
<div class="t" style="left:501px;top:876px;height:37px;line-height:37px;color:#111111;z-index:5;">扇</div>
<div class="t" style="left:989px;top:876px;height:37px;line-height:37px;color:#111111;z-index:5;">工程计划单</div>
<div class="t" style="left:1094px;top:876px;height:37px;line-height:37px;color:#111111;z-index:5;"><span style="letter-spacing:-0.3px">GCJHSLGC201801...</span></div>
<div class="t" style="left:1217px;top:876px;height:37px;line-height:37px;color:#111111;z-index:5;">车间</div>
<div class="t" style="left:608px;top:876px;width:89px;height:37px;line-height:37px;text-align:right;color:#111111;z-index:5;">1</div>
<div class="t" style="left:33px;top:913px;height:37px;line-height:37px;color:#111111;z-index:5;letter-spacing:-0.15px;">C2417</div>
<div class="t" style="left:148px;top:913px;height:37px;line-height:37px;color:#111111;z-index:5;">安装材料</div>
<div class="t" style="left:273px;top:913px;height:37px;line-height:37px;color:#111111;z-index:5;letter-spacing:-0.3px;">SC-1</div>
<div class="t" style="left:501px;top:913px;height:37px;line-height:37px;color:#111111;z-index:5;">组</div>
<div class="t" style="left:989px;top:913px;height:37px;line-height:37px;color:#111111;z-index:5;">工程计划单</div>
<div class="t" style="left:1094px;top:913px;height:37px;line-height:37px;color:#111111;z-index:5;"><span style="letter-spacing:-0.3px">GCJHSLGC201801...</span></div>
<div class="t" style="left:1217px;top:913px;height:37px;line-height:37px;color:#111111;z-index:5;">车间</div>
<div class="t" style="left:608px;top:913px;width:89px;height:37px;line-height:37px;text-align:right;color:#111111;z-index:5;">1</div>
<div style="left:9px;top:928px;width:1547px;height:2px;background:#CCCEDB;z-index:6;"></div>
<div style="left:1537px;top:283px;width:17px;height:645px;background:#E5E5E7;z-index:5;"></div>
<svg class="a" style="z-index:6;left:1541px;top:288px" width="9" height="5" viewBox="0 0 9 5"><path d="M0 5H9L4.5 0Z" fill="#9A9A9A"/></svg>
<div style="left:1541px;top:300px;width:9px;height:451px;background:#B5B5B7;z-index:6;"></div>
<svg class="a" style="z-index:6;left:1541px;top:918px" width="9" height="5" viewBox="0 0 9 5"><path d="M0 0H9L4.5 5Z" fill="#9A9A9A"/></svg>
<div style="left:8px;top:930px;width:1548px;height:28px;background:#007ACC;z-index:7;"></div>
<div class="t" style="left:18px;top:935px;height:21px;line-height:21px;color:#fff;z-index:8;"><span style="letter-spacing:0.2px">制单人:Admin</span></div>
<div class="t" style="left:102px;top:935px;height:21px;line-height:21px;color:#fff;z-index:8;"><span style="letter-spacing:0.22px">制单时间:2018-1-30 23:35:44</span></div>
<div class="t" style="left:272px;top:935px;height:21px;line-height:21px;color:#fff;z-index:8;">提交时间:</div>
<div class="t" style="left:332px;top:935px;height:21px;line-height:21px;color:#fff;z-index:8;">当前表单状态:待提交</div>
<div class="t" style="left:463px;top:935px;height:21px;line-height:21px;color:#fff;z-index:8;">提交:</div>
<div class="t" style="left:507px;top:935px;height:21px;line-height:21px;color:#fff;z-index:8;">审核:</div>
<div style="left:451px;top:933px;width:1px;height:22px;background:#E8F0F8;z-index:8;"></div>
<div style="left:542px;top:933px;width:1px;height:22px;background:#E8F0F8;z-index:8;"></div>
<div style="left:8px;top:958px;width:1549px;height:7px;background:#EEEEF2;z-index:7;"></div>
<div style="left:403px;top:386px;width:643px;height:460px;background:#E3E3EA;border:1px solid #A3A7C4;z-index:20;"></div>
<svg class="a" style="z-index:21;left:414px;top:399px" width="14" height="14" viewBox="0 0 14 14">
<rect x="0.5" y="0.5" width="13" height="13" fill="#F6F6F8" stroke="#BDBDBD"/><path d="M5.5 1V13M1 4.5H6M1 10.5H13M11.5 9V13" stroke="#DADADC" fill="none"/>
<rect x="6" y="1" width="7" height="7" fill="#C79A10"/><rect x="7" y="2" width="5" height="5" fill="#FFD84A"/>
<rect x="1" y="5" width="4" height="5" fill="#B01208"/><rect x="2" y="6" width="2" height="3" fill="#F0584A"/>
<rect x="6" y="9" width="5" height="4" fill="#3C78DC"/><rect x="7" y="10" width="3" height="2" fill="#7FB0FF"/>
</svg>
<div class="t" style="left:433px;top:395px;height:22px;line-height:22px;font-size:14.67px;color:#333;z-index:21;"><span style="letter-spacing:-1.1px">MRP</span>运算选项</div>
<svg class="a" style="left:1015px;top:402px;z-index:21" width="9" height="7" viewBox="0 0 9 7"><path d="M0.7 0.2L8.3 6.8M8.3 0.2L0.7 6.8" stroke="#111111" stroke-width="1.5"/></svg>
<div style="left:410px;top:425px;width:629px;height:414px;background:#EEEEF2;border:1px solid #B9BDD5;border-bottom:none;z-index:21;"></div>
<div style="left:411px;top:426px;width:79px;height:28px;background:#F1F1F3;z-index:22;"></div>
<svg class="a" style="z-index:23;left:414px;top:431px" width="6" height="18" viewBox="0 0 6 18"><rect x="0" y="0" width="1" height="1" fill="#A9A9B4"/><rect x="4" y="0" width="1" height="1" fill="#A9A9B4"/><rect x="2" y="2" width="1" height="1" fill="#A9A9B4"/><rect x="0" y="4" width="1" height="1" fill="#A9A9B4"/><rect x="4" y="4" width="1" height="1" fill="#A9A9B4"/><rect x="2" y="6" width="1" height="1" fill="#A9A9B4"/><rect x="0" y="8" width="1" height="1" fill="#A9A9B4"/><rect x="4" y="8" width="1" height="1" fill="#A9A9B4"/><rect x="2" y="10" width="1" height="1" fill="#A9A9B4"/><rect x="0" y="12" width="1" height="1" fill="#A9A9B4"/><rect x="4" y="12" width="1" height="1" fill="#A9A9B4"/><rect x="2" y="14" width="1" height="1" fill="#A9A9B4"/><rect x="0" y="16" width="1" height="1" fill="#A9A9B4"/><rect x="4" y="16" width="1" height="1" fill="#A9A9B4"/></svg>
<div class="t" style="left:426px;top:432px;height:19px;line-height:19px;color:#111111;z-index:23;">确定</div>
<div class="t" style="left:459px;top:432px;height:19px;line-height:19px;color:#111111;z-index:23;">取消</div>
<div style="left:493px;top:440px;width:7px;height:1px;background:#6E6E6E;z-index:23;"></div>
<svg class="a" style="z-index:23;left:493px;top:444px" width="7" height="4" viewBox="0 0 7 4"><path d="M0 0H7L3.5 4Z" fill="#6E6E6E"/></svg>
<div style="left:411px;top:454px;width:331px;height:1px;background:#CCCEDB;z-index:22;"></div>
<div class="t" style="left:423px;top:457px;height:21px;line-height:21px;color:#0072C6;z-index:25;">参与的仓库</div>
<div style="left:494px;top:455px;width:118px;height:26px;border-left:1px solid #CCCEDB;border-right:1px solid #CCCEDB;border-bottom:1px solid #CCCEDB;z-index:22;"></div>
<div class="t" style="left:505px;top:457px;height:21px;line-height:21px;color:#111111;z-index:25;">参与的材料计划单</div>
<div style="left:612px;top:455px;width:130px;height:26px;border-left:1px solid #CCCEDB;border-right:1px solid #CCCEDB;border-bottom:1px solid #CCCEDB;z-index:22;"></div>
<div class="t" style="left:622px;top:457px;height:21px;line-height:21px;color:#111111;z-index:25;">物料需求单生成选项</div>
<div style="left:742px;top:480px;width:296px;height:1px;background:#CCCEDB;z-index:22;"></div>
<div style="left:411px;top:481px;width:627px;height:329px;background:#fff;border:2px solid #CCCEDB;border-top-width:1px;z-index:23;"></div>
<div style="left:413px;top:482px;width:623px;height:21px;background:#FCFCFD;border-bottom:1px solid #CCCEDB;z-index:24;"></div>
<div style="left:660px;top:482px;width:1px;height:21px;background:#CCCEDB;z-index:25;"></div>
<div class="t" style="left:417px;top:483px;height:21px;line-height:21px;color:#111111;z-index:25;">名称</div>
<div class="t" style="left:665px;top:483px;height:21px;line-height:21px;color:#111111;z-index:25;">备注</div>
<div style="left:661px;top:503px;width:375px;height:18px;background:#E3ECF9;z-index:24;"></div>
<div style="left:411px;top:810px;width:627px;height:28px;background:#007ACC;z-index:24;"></div>
<svg class="a" style="left:420px;top:510px;z-index:26" width="6" height="6" viewBox="0 0 6 6"><path d="M6 0V6H0Z" fill="#6E6E6E"/></svg>
<svg class="a" style="left:449px;top:505px;z-index:26" width="17" height="14" viewBox="0 0 17 14">
<path d="M9.6 2.6C10.8 0.4 13.6 0.3 15.2 2.2" stroke="#6A72D0" fill="none" stroke-width="0.9"/><path d="M16.4 0.8L15.9 4.4L13.2 2.9Z" fill="#5860C8"/>
<path d="M0.5 13.3V3.6L1.6 2.5H5.2L6.4 3.7H12.3V6.4" fill="url(#fb)" stroke="#C8A448" stroke-width="0.9"/>
<path d="M0.6 13.5L3.9 6.5H15.8L12.6 13.5Z" fill="url(#fg)" stroke="#A87818" stroke-width="0.9"/>
<path d="M0.6 13.6H12.6L13.2 12.4" stroke="#5C4008" stroke-width="0.9" fill="none"/></svg>
<div class="t" style="left:471px;top:504px;height:19px;line-height:19px;color:#111111;z-index:26;">数据列表</div>
<svg class="a" style="left:438px;top:528px;z-index:26" width="6" height="6" viewBox="0 0 6 6"><path d="M6 0V6H0Z" fill="#6E6E6E"/></svg>
<svg class="a" style="left:450px;top:523px;z-index:26" width="13" height="13" viewBox="0 0 13 13">
<rect x="0.5" y="0.5" width="12" height="12" fill="#fff" stroke="#BEC2DA"/><path d="M2.6 7L5 9.6L10.4 2.9" stroke="#727272" stroke-width="1.8" fill="none"/></svg>
<svg class="a" style="left:467px;top:523px;z-index:26" width="17" height="14" viewBox="0 0 17 14">
<path d="M9.6 2.6C10.8 0.4 13.6 0.3 15.2 2.2" stroke="#6A72D0" fill="none" stroke-width="0.9"/><path d="M16.4 0.8L15.9 4.4L13.2 2.9Z" fill="#5860C8"/>
<path d="M0.5 13.3V3.6L1.6 2.5H5.2L6.4 3.7H12.3V6.4" fill="url(#fb)" stroke="#C8A448" stroke-width="0.9"/>
<path d="M0.6 13.5L3.9 6.5H15.8L12.6 13.5Z" fill="url(#fg)" stroke="#A87818" stroke-width="0.9"/>
<path d="M0.6 13.6H12.6L13.2 12.4" stroke="#5C4008" stroke-width="0.9" fill="none"/></svg>
<div class="t" style="left:489px;top:522px;height:19px;line-height:19px;color:#111111;z-index:26;">公司</div>
<svg class="a" style="left:468px;top:541px;z-index:26" width="13" height="13" viewBox="0 0 13 13">
<rect x="0.5" y="0.5" width="12" height="12" fill="#fff" stroke="#BEC2DA"/><path d="M2.6 7L5 9.6L10.4 2.9" stroke="#727272" stroke-width="1.8" fill="none"/></svg>
<svg class="a" style="left:485px;top:540px;z-index:26" width="14" height="14" viewBox="0 0 14 14">
<rect x="0" y="0" width="14" height="14" fill="#7878B8"/><rect x="1" y="0.5" width="11" height="12.5" fill="#C6C6CA"/>
<rect x="12" y="0" width="2" height="14" fill="#5050A4"/><rect x="0" y="13" width="14" height="1" fill="#4A4AA0"/><rect x="1" y="1" width="2" height="2" fill="#fff"/><rect x="10" y="1" width="2" height="2" fill="#fff"/><rect x="4" y="1" width="5" height="2" fill="#22BE22"/><rect x="1" y="4" width="2" height="2" fill="#fff"/><rect x="10" y="4" width="2" height="2" fill="#fff"/><rect x="4" y="4" width="5" height="2" fill="#5CF03C"/><rect x="1" y="7" width="2" height="2" fill="#fff"/><rect x="10" y="7" width="2" height="2" fill="#fff"/><rect x="4" y="7" width="5" height="2" fill="#FFF800"/><rect x="1" y="10" width="2" height="2" fill="#fff"/><rect x="10" y="10" width="2" height="2" fill="#fff"/><rect x="4" y="10" width="5" height="2" fill="#FF4408"/></svg>
<div class="t" style="left:507px;top:540px;height:19px;line-height:19px;color:#111111;z-index:26;">公司仓库</div>
<svg class="a" style="left:438px;top:564px;z-index:26" width="6" height="6" viewBox="0 0 6 6"><path d="M6 0V6H0Z" fill="#6E6E6E"/></svg>
<svg class="a" style="left:450px;top:559px;z-index:26" width="13" height="13" viewBox="0 0 13 13">
<rect x="0.5" y="0.5" width="12" height="12" fill="#fff" stroke="#BEC2DA"/><path d="M2.6 7L5 9.6L10.4 2.9" stroke="#727272" stroke-width="1.8" fill="none"/></svg>
<svg class="a" style="left:467px;top:559px;z-index:26" width="17" height="14" viewBox="0 0 17 14">
<path d="M9.6 2.6C10.8 0.4 13.6 0.3 15.2 2.2" stroke="#6A72D0" fill="none" stroke-width="0.9"/><path d="M16.4 0.8L15.9 4.4L13.2 2.9Z" fill="#5860C8"/>
<path d="M0.5 13.3V3.6L1.6 2.5H5.2L6.4 3.7H12.3V6.4" fill="url(#fb)" stroke="#C8A448" stroke-width="0.9"/>
<path d="M0.6 13.5L3.9 6.5H15.8L12.6 13.5Z" fill="url(#fg)" stroke="#A87818" stroke-width="0.9"/>
<path d="M0.6 13.6H12.6L13.2 12.4" stroke="#5C4008" stroke-width="0.9" fill="none"/></svg>
<div class="t" style="left:489px;top:558px;height:19px;line-height:19px;color:#111111;z-index:26;">工地</div>
<svg class="a" style="left:468px;top:577px;z-index:26" width="13" height="13" viewBox="0 0 13 13">
<rect x="0.5" y="0.5" width="12" height="12" fill="#fff" stroke="#BEC2DA"/><path d="M2.6 7L5 9.6L10.4 2.9" stroke="#727272" stroke-width="1.8" fill="none"/></svg>
<svg class="a" style="left:485px;top:576px;z-index:26" width="14" height="14" viewBox="0 0 14 14">
<rect x="0" y="0" width="14" height="14" fill="#7878B8"/><rect x="1" y="0.5" width="11" height="12.5" fill="#C6C6CA"/>
<rect x="12" y="0" width="2" height="14" fill="#5050A4"/><rect x="0" y="13" width="14" height="1" fill="#4A4AA0"/><rect x="1" y="1" width="2" height="2" fill="#fff"/><rect x="10" y="1" width="2" height="2" fill="#fff"/><rect x="4" y="1" width="5" height="2" fill="#22BE22"/><rect x="1" y="4" width="2" height="2" fill="#fff"/><rect x="10" y="4" width="2" height="2" fill="#fff"/><rect x="4" y="4" width="5" height="2" fill="#5CF03C"/><rect x="1" y="7" width="2" height="2" fill="#fff"/><rect x="10" y="7" width="2" height="2" fill="#fff"/><rect x="4" y="7" width="5" height="2" fill="#FFF800"/><rect x="1" y="10" width="2" height="2" fill="#fff"/><rect x="10" y="10" width="2" height="2" fill="#fff"/><rect x="4" y="10" width="5" height="2" fill="#FF4408"/></svg>
<div class="t" style="left:507px;top:576px;height:19px;line-height:19px;color:#111111;z-index:26;">某某工程工地仓库</div>
<div id="w"></div>
</body></html>
